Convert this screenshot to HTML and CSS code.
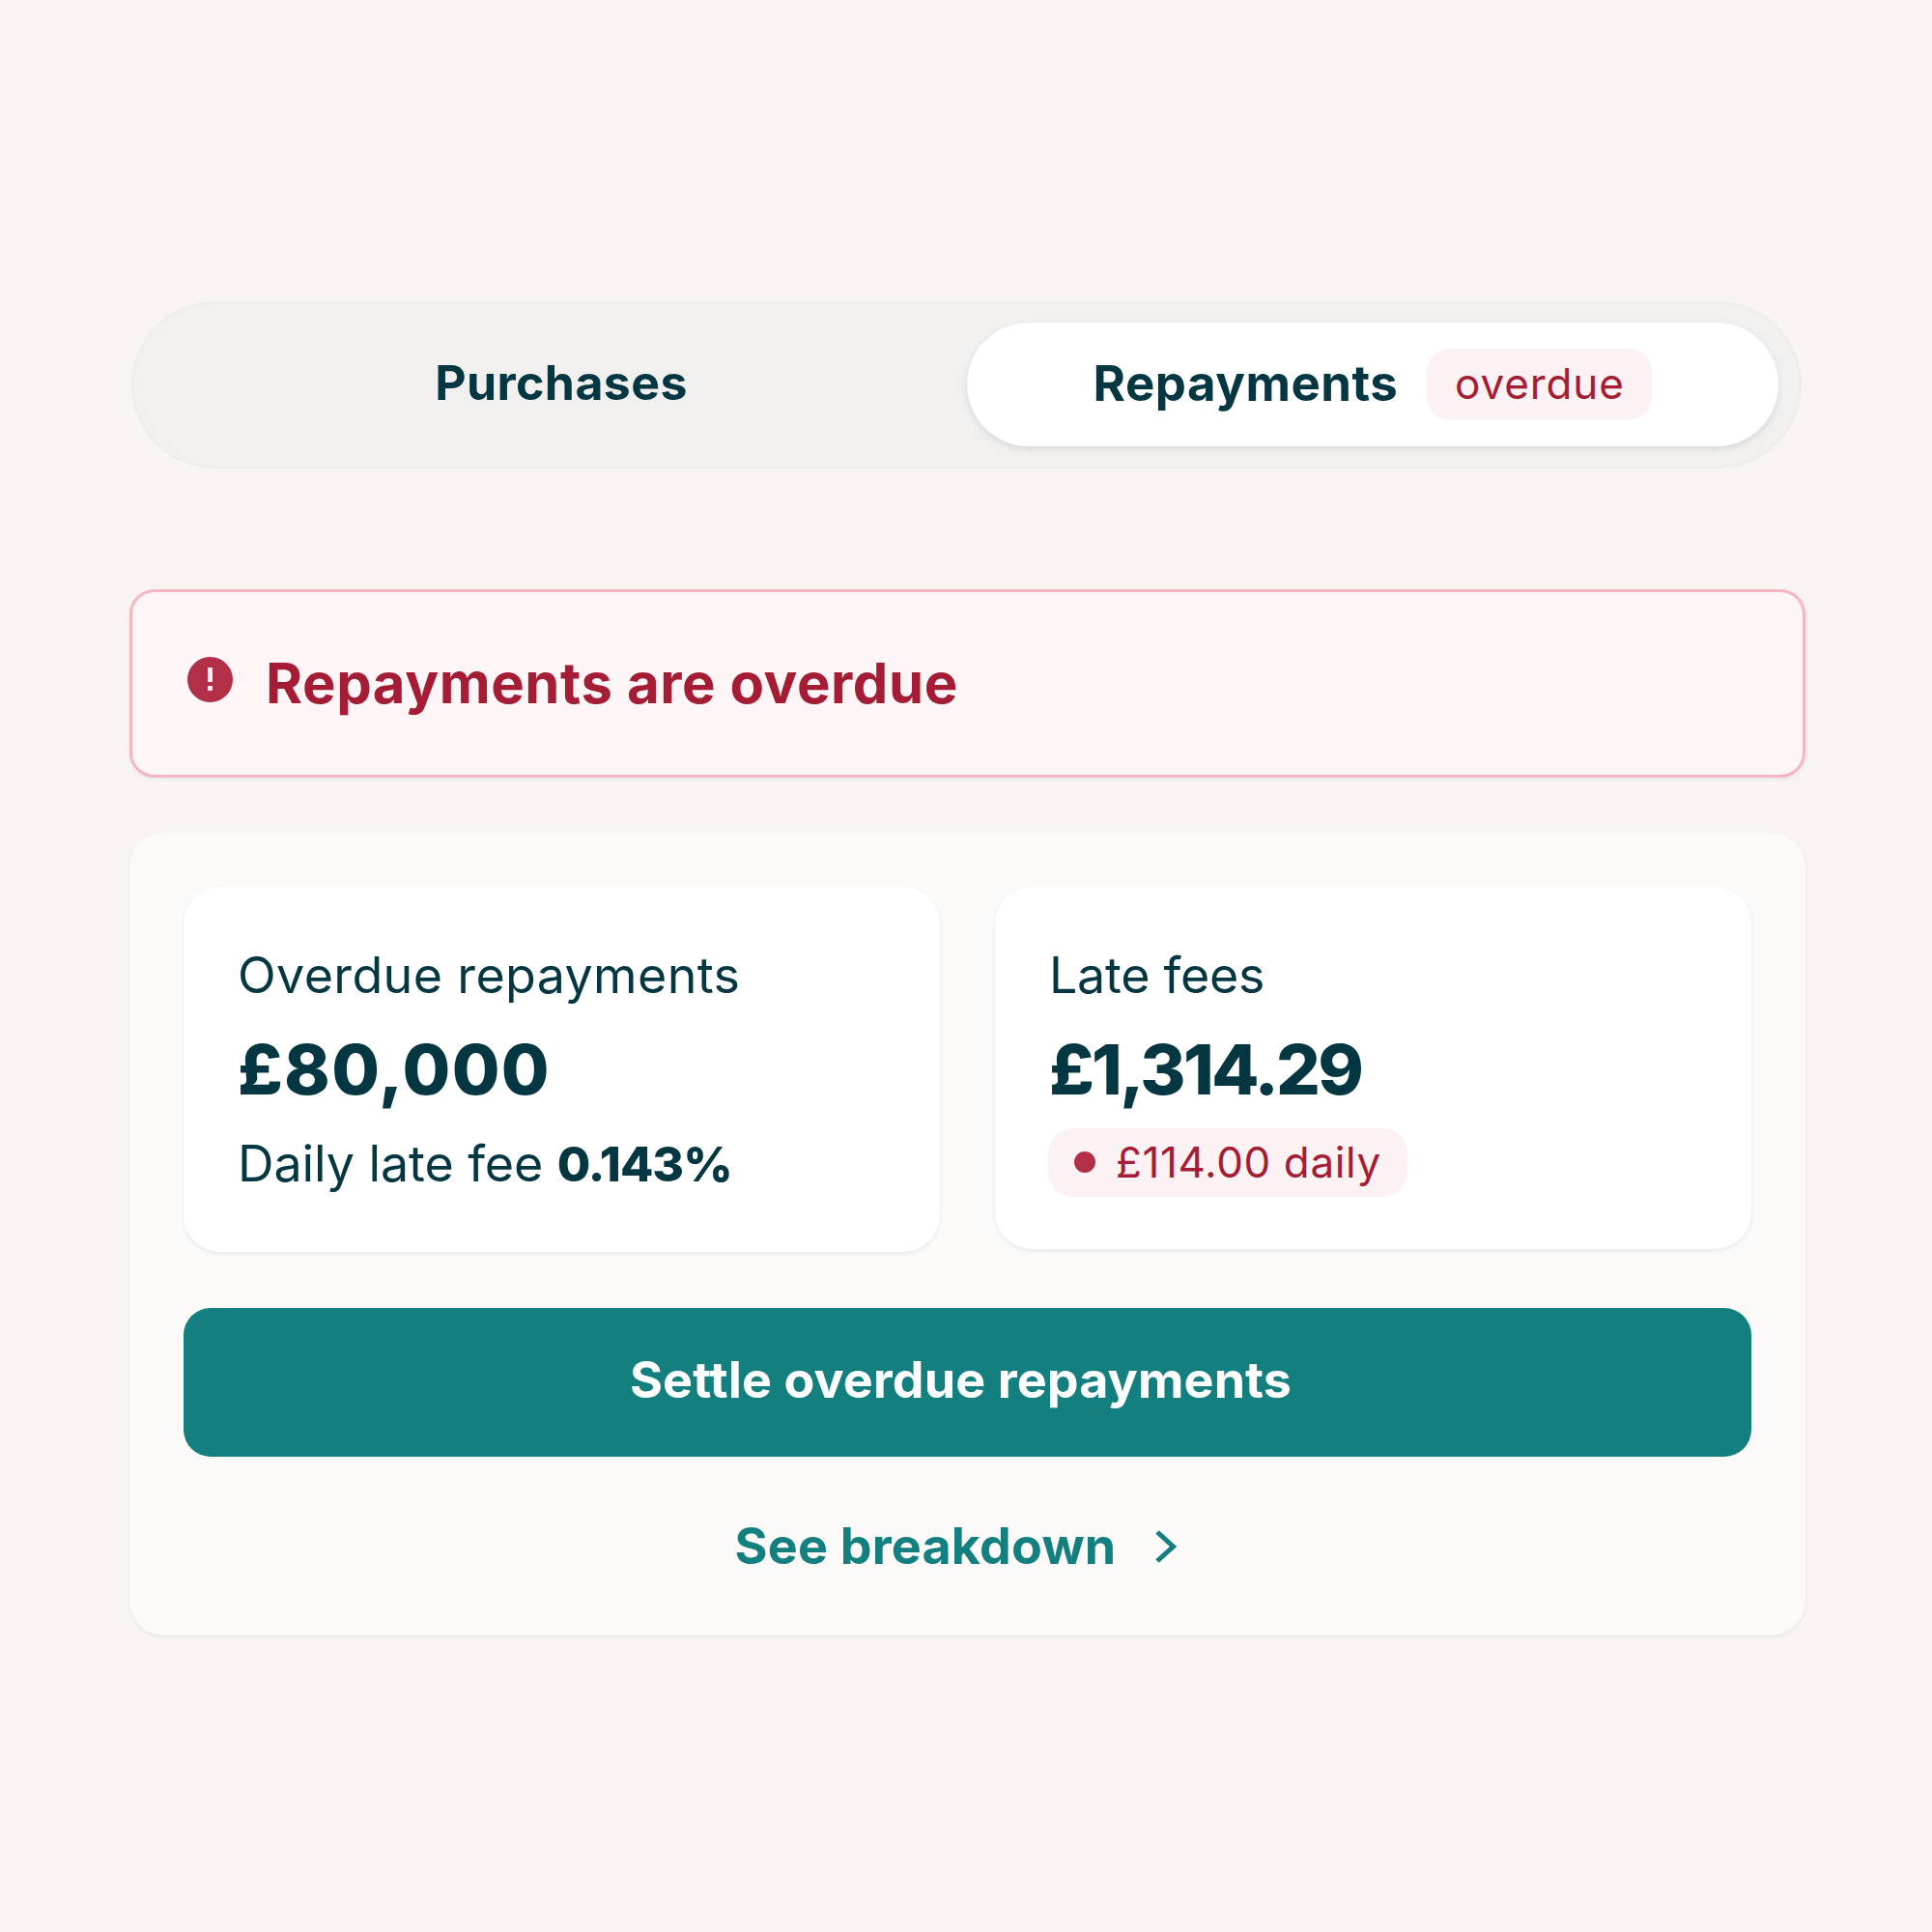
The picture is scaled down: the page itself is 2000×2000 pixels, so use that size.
FILE: index.html
```html
<!DOCTYPE html>
<html lang="en">
<head>
<meta charset="utf-8">
<title>Repayments</title>
<link rel="stylesheet" href="styles.css">
</head>
<body>
<main class="page">
  <nav class="tabs">
    <div class="tab tab-plain">Purchases</div>
    <div class="tab tab-active"><span class="tab-label">Repayments</span><span class="tag">overdue</span></div>
  </nav>
  <section class="alert">
    <svg class="alert-icon" viewBox="0 0 47 47" aria-hidden="true">
      <circle cx="23.5" cy="23.5" r="23.5" fill="#b23047"/>
      <rect x="21" y="11" width="5" height="15" fill="#fdeef0"/>
      <rect x="21" y="30" width="5" height="5" fill="#fdeef0"/>
    </svg>
    <h1 class="alert-title">Repayments are overdue</h1>
  </section>
  <section class="panel">
    <div class="cards">
      <article class="card card-left">
        <div class="label label-long">Overdue repayments</div>
        <div class="amount amount-a">£80,000</div>
        <div class="note">Daily late fee <b class="note-strong">0.143%</b></div>
      </article>
      <article class="card card-right">
        <div class="label label-short">Late fees</div>
        <div class="amount amount-b">£1,314.29</div>
        <div class="daily"><span class="dot"></span><span class="daily-text">£114.00 daily</span></div>
      </article>
    </div>
    <button class="settle" type="button">Settle overdue repayments</button>
    <a class="more"><span>See breakdown</span>
      <svg class="chev" viewBox="0 0 23 34" aria-hidden="true"><path d="M3 2 19.5 17 3 32" fill="none" stroke="#13807f" stroke-width="5"/></svg>
    </a>
  </section>
</main>
</body>
</html>
```
FILE: styles.css
```css
* { box-sizing: border-box; }
html, body { margin: 0; padding: 0; }
body {
  width: 2000px;
  height: 2000px;
  background: #f7f4f1;
  font-family: Inter, "Liberation Sans", sans-serif;
  color: #053742;
}
.page {
  width: 1735px;
  margin-left: 134px;
  padding-top: 312px;
  display: flex;
  flex-direction: column;
}
.tabs {
  margin: 0 4px 0 2px;
  height: 173px;
  padding: 22px 24px 23px 22px;
  border-radius: 87px;
  background: #f2f0ee;
  box-shadow: inset 0 0 5px rgba(0,0,0,.035);
  display: grid;
  grid-template-columns: 843px 840px;
}
.tab {
  display: flex;
  align-items: center;
  justify-content: center;
  font-size: 50px;
  font-weight: 700;
  letter-spacing: .4px;
  padding-bottom: 5px;
}
.tab-plain { padding-left: 3px; }
.tab-active {
  background: #fff;
  border-radius: 64px;
  box-shadow: 0 3px 7px rgba(0,0,0,.1);
  gap: 30px;
  padding: 0;
  font-size: 51px;
  letter-spacing: .5px;
}
.tab-label { padding-bottom: 3px; }
.tag {
  width: 233px;
  height: 74px;
  border-radius: 24px;
  background: #fcf1f3;
  color: #a51d35;
  font-size: 44px;
  font-weight: 400;
  letter-spacing: .9px;
  padding-bottom: 2px;
  display: flex;
  align-items: center;
  justify-content: center;
}
.alert {
  margin-top: 125px;
  height: 195px;
  border: 3px solid #f6b6c1;
  border-radius: 26px;
  background: #fef5f6;
  box-shadow: 0 2px 4px rgba(0,0,0,.05);
  padding-left: 57px;
  display: flex;
  align-items: center;
  gap: 34px;
}
.alert-icon { width: 47px; height: 47px; flex: none; margin-bottom: 8px; }
.alert-title {
  margin: 0 0 2px;
  font-size: 58px;
  font-weight: 700;
  letter-spacing: .6px;
  color: #a51d35;
}
.panel {
  margin-top: 57px;
  height: 831px;
  padding: 56px 56px 0;
  border-radius: 36px;
  background: #fbfaf8;
  box-shadow: 0 2px 4px rgba(0,0,0,.06);
  display: flex;
  flex-direction: column;
}
.cards {
  display: grid;
  grid-template-columns: 783px 783px;
  gap: 57px;
  align-items: start;
}
.card {
  background: #fff;
  border-radius: 38px;
  padding: 62px 56px 0 56px;
  box-shadow: 0 2px 5px rgba(0,0,0,.07);
}
.card-left { height: 378px; }
.card-right { height: 375px; }
.label { font-size: 52px; font-weight: 400; line-height: 60px; }
.label-long { letter-spacing: .35px; }
.label-short { letter-spacing: -.3px; }
.amount {
  margin-top: 28px;
  font-size: 72px;
  font-weight: 800;
  line-height: 78px;
}
.amount-a { letter-spacing: 1.3px; }
.amount-b { letter-spacing: -2.7px; }
.note { margin-top: 29px; font-size: 52px; letter-spacing: -.1px; line-height: 60px; }
.note-strong { font-size: 50px; font-weight: 800; letter-spacing: -1px; }
.daily {
  margin-top: 22px;
  margin-left: -1px;
  width: 372px;
  height: 71px;
  border-radius: 26px;
  background: #fcf1f3;
  color: #a51d35;
  font-size: 44px;
  letter-spacing: .6px;
  display: flex;
  align-items: center;
  padding: 0 0 2px 27px;
  gap: 21px;
}
.dot { width: 22px; height: 22px; border-radius: 50%; background: #b23047; flex: none; }
.settle {
  margin-top: 58px;
  height: 154px;
  border: 0;
  border-radius: 28px;
  background: #13807f;
  color: #fff;
  font-family: inherit;
  font-size: 52px;
  font-weight: 700;
  letter-spacing: .1px;
  padding: 0 14px 6px 0;
}
.more {
  margin-top: 63px;
  display: flex;
  justify-content: center;
  align-items: center;
  gap: 40px;
  padding-right: 24px;
  color: #13807f;
  font-size: 52px;
  font-weight: 700;
  letter-spacing: .2px;
  line-height: 60px;
}
.chev { width: 23px; height: 34px; flex: none; }
```
